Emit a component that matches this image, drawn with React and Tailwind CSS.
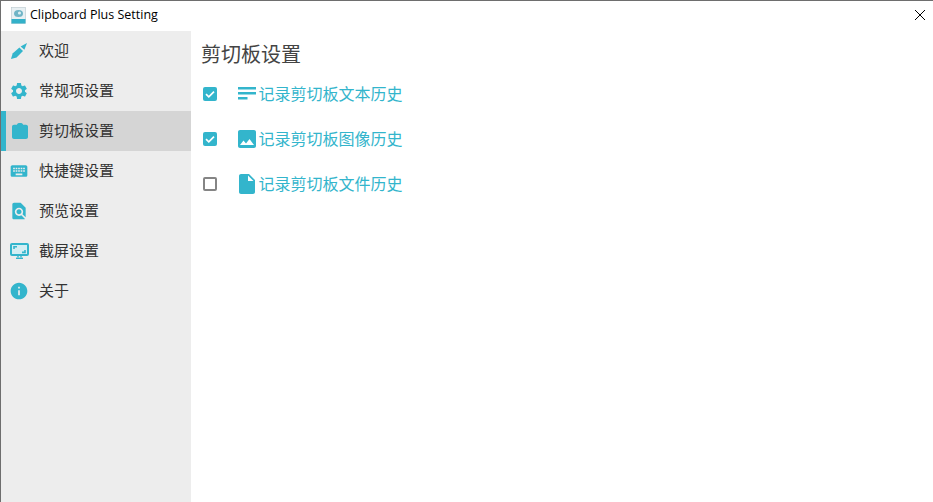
import React from 'react';
import { MdSettings, MdKeyboard, MdImage, MdInsertDriveFile, MdInfo, MdFindInPage } from 'react-icons/md';

const PenIcon = ({ className }) => (
  <svg viewBox="0 0 16 16" className={className} fill="currentColor">
    <path d="M0 16 L1.6 10.4 L8.4 4.4 L12 8 L5.6 14.4 Z" />
    <path d="M9.6 3.4 L16 0 L13.4 6.8 Z" />
  </svg>
);

const ClipIcon = ({ className }) => (
  <svg viewBox="0 0 16 16" className={className} fill="currentColor">
    <path d="M2 1.8 H5 C5 0.6 6 0 8 0 C10 0 11 0.6 11 1.8 H14 C15.1 1.8 16 2.7 16 3.8 V14 C16 15.1 15.1 16 14 16 H2 C0.9 16 0 15.1 0 14 V3.8 C0 2.7 0.9 1.8 2 1.8 Z" />
  </svg>
);

const LinesIcon = ({ className }) => (
  <svg viewBox="0 0 18 13" className={className} fill="currentColor">
    <rect x="0" y="0" width="18" height="2.5" />
    <rect x="0" y="5" width="18" height="2.5" />
    <rect x="0" y="10" width="9.5" height="2.5" />
  </svg>
);

const ScreenIcon = ({ className }) => (
  <svg viewBox="0 0 19 16" className={className} fill="none" stroke="currentColor">
    <rect x="1" y="1" width="17" height="11" rx="1" strokeWidth="2" fill="#d3eef3" />
    <path d="M4 6 V3.8 H7 M15 7 V9.4 H12" strokeWidth="1.6" />
    <path d="M8 13 V14.5 M11 13 V14.5" strokeWidth="1.4" />
    <path d="M6 15.3 H13" strokeWidth="1.4" />
  </svg>
);

const AppLogo = () => (
  <svg viewBox="0 0 15 17" className="w-[15px] h-[17px] shrink-0 mb-[1px]">
    <rect x="0.5" y="0.5" width="14" height="16" fill="#e8f0f3" stroke="#b7c6cc" strokeWidth="0.6" />
    <ellipse cx="7.5" cy="6.5" rx="4.5" ry="3.5" fill="#6fb4c6" />
    <circle cx="8.5" cy="6" r="1.6" fill="#d9edf2" />
    <rect x="0.5" y="12" width="14" height="4.5" fill="#33b1c9" />
  </svg>
);

const CloseIcon = () => (
  <svg viewBox="0 0 10 10" className="w-[10px] h-[10px]" stroke="#000" strokeWidth="1" fill="none">
    <path d="M0 0 L10 10 M10 0 L0 10" />
  </svg>
);

const navItems = [
  { label: '欢迎', icon: PenIcon, size: 'w-4 h-4' },
  { label: '常规项设置', icon: MdSettings, size: 'w-5 h-5' },
  { label: '剪切板设置', icon: ClipIcon, size: 'w-4 h-4 ml-[2px]', active: true },
  { label: '快捷键设置', icon: MdKeyboard, size: 'w-5 h-5' },
  { label: '预览设置', icon: MdFindInPage, size: 'w-5 h-5' },
  { label: '截屏设置', icon: ScreenIcon, size: 'w-[19px] h-4' },
  { label: '关于', icon: MdInfo, size: 'w-5 h-5' },
];

const options = [
  { label: '记录剪切板文本历史', icon: LinesIcon, size: 'w-[18px] h-[13px]', checked: true },
  { label: '记录剪切板图像历史', icon: MdImage, size: 'w-6 h-6', checked: true },
  { label: '记录剪切板文件历史', icon: MdInsertDriveFile, size: 'w-6 h-6', checked: false },
];

const Checkbox = ({ checked }) =>
  checked ? (
    <div className="w-[14px] h-[14px] rounded-[2px] bg-[#33b5cc] flex items-center justify-center">
      <svg viewBox="0 0 14 14" className="w-[14px] h-[14px]" fill="none" stroke="#fff" strokeWidth="1.7">
        <path d="M3 7.2 L5.8 9.8 L11 4.6" />
      </svg>
    </div>
  ) : (
    <div className="w-[14px] h-[14px] rounded-[2px] border-2 border-[#858585] bg-white" />
  );

export default function App() {
  return (
    <div
      className="w-[933px] h-[502px] overflow-hidden flex flex-col bg-white border-t border-l border-[#6e6e6e] text-[#333]"
      style={{ fontFamily: '"Noto Sans CJK SC", "Noto Sans", sans-serif' }}
    >
      {/* Title bar */}
      <div className="h-[30px] shrink-0 flex items-center pl-[10px] pr-[8px]">
        <AppLogo />
        <span
          className="ml-[4px] mb-[1px] text-[12.5px] text-black"
          style={{ fontFamily: '"Open Sans", sans-serif' }}
        >
          Clipboard Plus Setting
        </span>
        <div className="ml-auto mb-[2px]">
          <CloseIcon />
        </div>
      </div>

      <div className="flex flex-1 min-h-0">
        {/* Sidebar */}
        <div className="w-[190px] shrink-0 bg-[#ededed]">
          {navItems.map((item) => {
            const Icon = item.icon;
            return (
              <div
                key={item.label}
                className={`h-10 flex items-center text-[15px] ${
                  item.active ? 'bg-[#d5d5d5] border-l-[5px] border-[#33b5cc] pl-[5px]' : 'pl-[10px]'
                }`}
              >
                <span className="w-4 h-4 flex items-center justify-center text-[#33b5cc]">
                  <Icon className={`${item.size} shrink-0`} />
                </span>
                <span className="ml-3 mb-[2px]">{item.label}</span>
              </div>
            );
          })}
        </div>

        {/* Content */}
        <div className="flex-1 pl-[10px] pt-[9px]">
          <h1 className="text-[20px] leading-7 font-normal mb-[3px] text-[#444]">剪切板设置</h1>
          {options.map((opt) => {
            const Icon = opt.icon;
            return (
              <div key={opt.label} className="h-[45px] flex items-center">
                <div className="ml-[2px] w-[35px]">
                  <Checkbox checked={opt.checked} />
                </div>
                <span className="w-[18px] flex items-center justify-center text-[#33b5cc]">
                  <Icon className={`${opt.size} shrink-0`} />
                </span>
                <span className="ml-[2.5px] mb-[1px] text-[16px] text-[#33b5cc]">{opt.label}</span>
              </div>
            );
          })}
        </div>
      </div>
    </div>
  );
}
